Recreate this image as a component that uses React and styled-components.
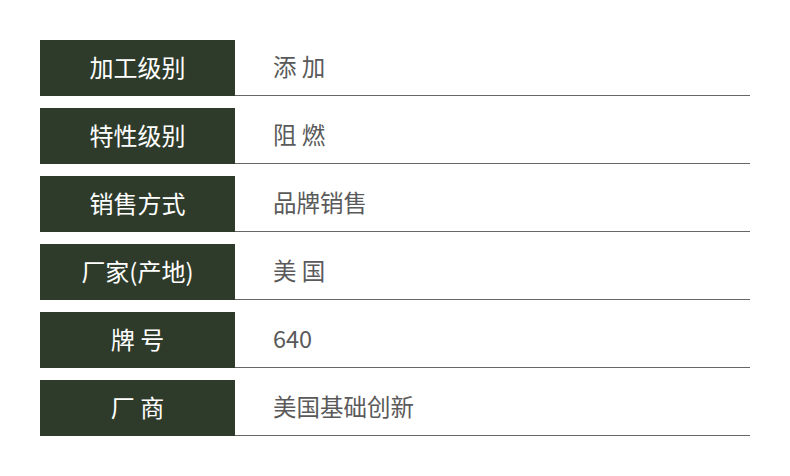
import styled, { createGlobalStyle } from "styled-components"

const GlobalStyle = createGlobalStyle`
    body {
        margin: 0;
        background: #fff;
        font-family: "Noto Sans CJK SC", "Noto Sans", sans-serif;
    }
`

const Table = styled.div`
    display: flex;
    flex-direction: column;
    gap: 12px;
    width: 710px;
    padding: 40px 0 0 40px;
`

const Row = styled.div`
    display: flex;
    align-items: stretch;
    height: 55px;
    border-bottom: 1px solid #666;
`

const Label = styled.div`
    width: 195px;
    height: 56px;
    margin-bottom: -1px;
    padding-bottom: 4px;
    box-sizing: border-box;
    background: #2e3b2a;
    color: #fff;
    font-size: 24px;
    display: flex;
    align-items: center;
    justify-content: center;
    white-space: pre;
`

const Value = styled.div`
    display: flex;
    align-items: center;
    padding: 0 0 3px 38px;
    color: #5a5a5a;
    font-size: 23.5px;
    white-space: pre;
`

const rows = [
    ["加工级别", "添 加"],
    ["特性级别", "阻 燃"],
    ["销售方式", "品牌销售"],
    ["厂家(产地)", "美 国"],
    ["牌 号", "640"],
    ["厂 商", "美国基础创新"],
]

const App = () => {
    return (
        <>
            <GlobalStyle />
            <Table>
                {rows.map(([k, v]) => (
                    <Row key={k}>
                        <Label>{k}</Label>
                        <Value>{v}</Value>
                    </Row>
                ))}
            </Table>
        </>
    )
}

export default App
